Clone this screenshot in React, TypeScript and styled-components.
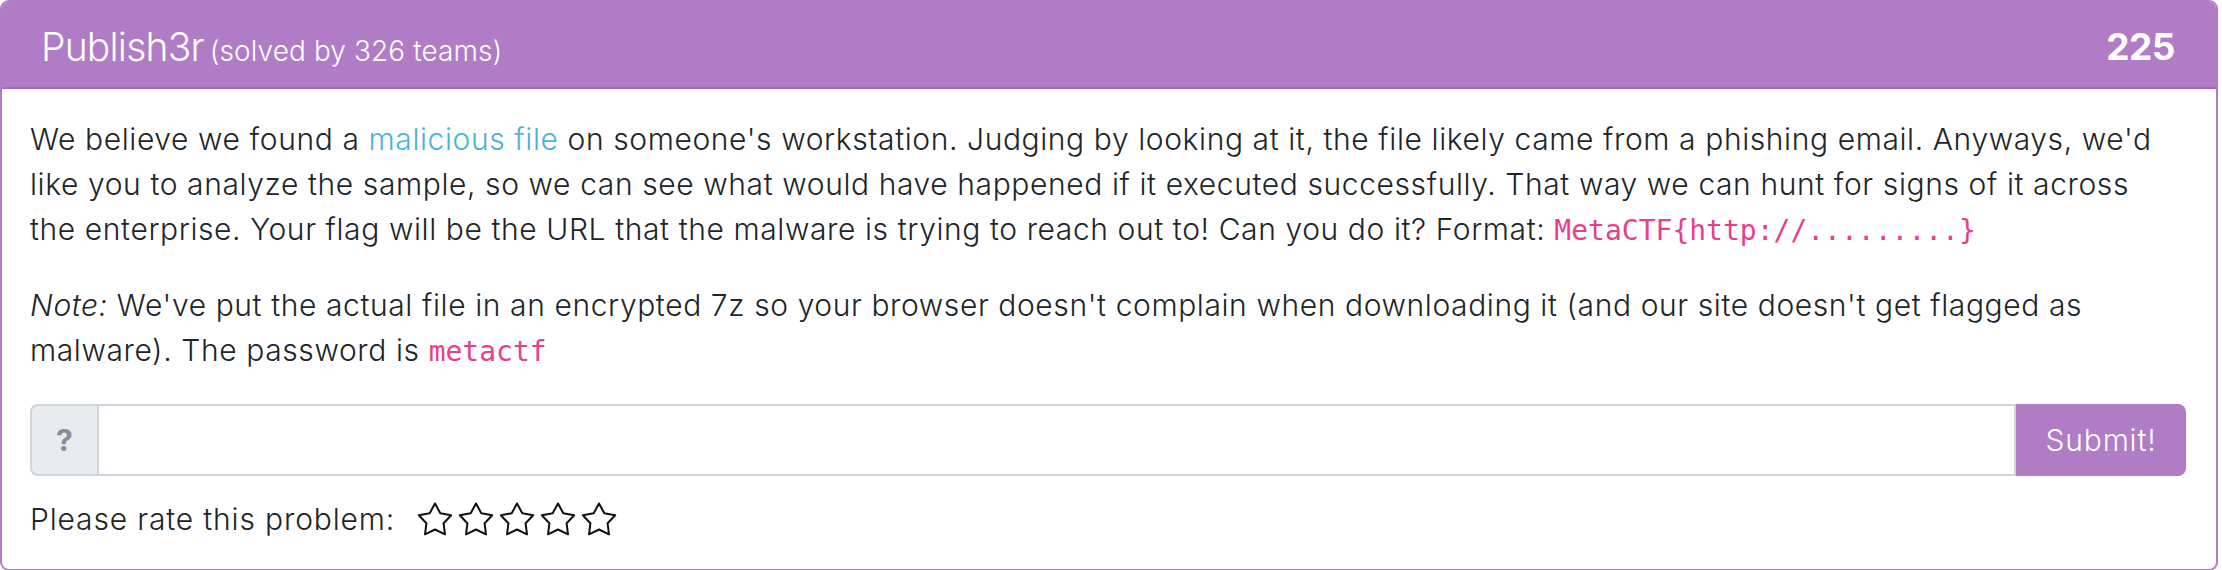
import React from "react";
import styled, { createGlobalStyle } from "styled-components";

const Global = createGlobalStyle`
  *, *::before, *::after { box-sizing: border-box; }
  body {
    margin: 0;
    background: #ffffff;
    font-family: "Inter", "Liberation Sans", sans-serif;
    color: #212529;
  }
`;

const Card = styled.div`
  width: 2218px;
  border: 2px solid #b07cc6;
  border-radius: 9px;
  overflow: hidden;
  background: #ffffff;
`;

const Header = styled.div`
  display: flex;
  align-items: center;
  justify-content: space-between;
  height: 87px;
  padding: 3px 41px 0 39px;
  background: #b07cc6;
  border-bottom: 2px solid #a36bba;
  color: #ffffff;
`;

const Title = styled.div`
  display: flex;
  align-items: baseline;
  gap: 6px;
  font-size: 39px;
  font-weight: 300;
  letter-spacing: -0.8px;
  white-space: nowrap;
`;

const Solved = styled.span`
  font-size: 28px;
  font-weight: 300;
  letter-spacing: 0.1px;
`;

const Points = styled.div`
  font-size: 37px;
  font-weight: 700;
  letter-spacing: -0.5px;
`;

const Body = styled.div`
  padding: 28px 30px 28px 28px;
`;

const Para = styled.p`
  margin: 0 0 30px;
  font-size: 30px;
  line-height: 45px;
  font-weight: 300;
  letter-spacing: 0.6px;
  color: #212529;
`;

const Link = styled.a`
  color: #4bb2d8;
  text-decoration: none;
`;

const Code = styled.code`
  font-family: "DejaVu Sans Mono", "Liberation Mono", monospace;
  font-size: 28px;
  letter-spacing: 0;
  color: #e83e8c;
`;

const InputGroup = styled.div`
  display: flex;
  height: 72px;
`;

const Prepend = styled.div`
  display: flex;
  align-items: center;
  justify-content: center;
  width: 69px;
  background: #e9ecef;
  border: 2px solid #ced4da;
  border-radius: 8px 0 0 8px;
  color: #868e96;
  font-size: 30px;
  font-weight: 700;
`;

const FlagInput = styled.input`
  flex: 1;
  min-width: 0;
  border: 2px solid #ced4da;
  border-left: none;
  border-radius: 0;
  outline: none;
  font-size: 30px;
  padding: 0 18px;
  font-family: inherit;
`;

const SubmitButton = styled.button`
  width: 170px;
  border: none;
  border-radius: 0 8px 8px 0;
  background: #b07cc6;
  color: #ffffff;
  font-family: inherit;
  font-size: 30px;
  font-weight: 300;
  letter-spacing: 0.8px;
  padding: 0;
  cursor: pointer;
`;

const RatingRow = styled.div`
  display: flex;
  align-items: center;
  margin-top: 20px;
  height: 45px;
  font-size: 30px;
  font-weight: 300;
  letter-spacing: 0.85px;
`;

const Stars = styled.div`
  display: flex;
  gap: 5px;
  margin-left: 22px;
`;

const StarSvg = styled.svg`
  width: 36px;
  height: 34px;
  display: block;
`;

const Star = () => (
  <StarSvg viewBox="0 0 36 34">
    <path
      d="M18 1.5 L23.3 11.2 L34.2 13.3 L26.6 21.3 L28 32.3 L18 27.5 L8 32.3 L9.4 21.3 L1.8 13.3 L12.7 11.2 Z"
      fill="none"
      stroke="#111"
      strokeWidth="2"
      strokeLinejoin="round"
    />
  </StarSvg>
);

export default function App() {
  return (
    <>
      <Global />
      <Card>
        <Header>
          <Title>
            <span>Publish3r</span>
            <Solved>(solved by 326 teams)</Solved>
          </Title>
          <Points>225</Points>
        </Header>
        <Body>
          <Para>
            We believe we found a <Link href="#">malicious file</Link> on someone's workstation. Judging by
            looking at it, the file likely came from a phishing email. Anyways, we'd like you to analyze the
            sample, so we can see what would have happened if it executed successfully. That way we can hunt for
            signs of it across the{"\u00a0"}enterprise. Your flag will be the URL that the malware is trying to
            reach out to! Can you do it? Format: <Code>MetaCTF{"{"}http://.........{"}"}</Code>
          </Para>
          <Para>
            <em>Note:</em> We've put the actual file in an encrypted 7z so your browser doesn't complain when
            downloading it (and our site doesn't get flagged as malware). The password is <Code>metactf</Code>
          </Para>
          <InputGroup>
            <Prepend>?</Prepend>
            <FlagInput type="text" />
            <SubmitButton>Submit!</SubmitButton>
          </InputGroup>
          <RatingRow>
            Please rate this problem:
            <Stars>
              <Star />
              <Star />
              <Star />
              <Star />
              <Star />
            </Stars>
          </RatingRow>
        </Body>
      </Card>
    </>
  );
}
